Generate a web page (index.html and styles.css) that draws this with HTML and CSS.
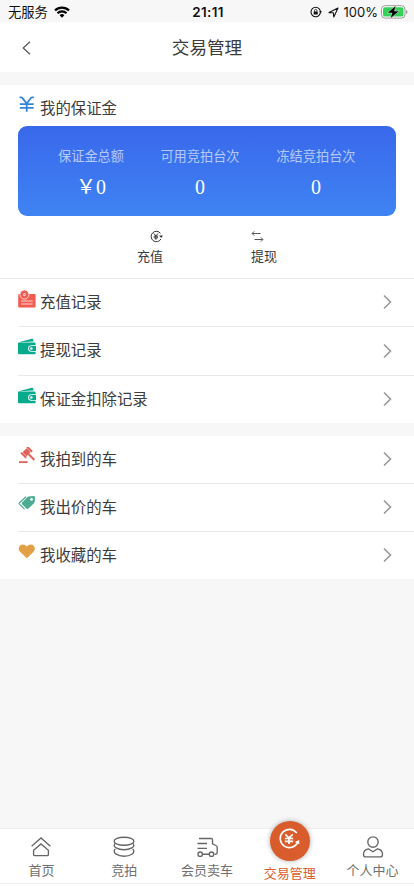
FILE: index.html
```html
<!DOCTYPE html>
<html lang="zh-CN">
<head>
<meta charset="utf-8">
<meta name="viewport" content="width=device-width, initial-scale=1">
<title>交易管理</title>
<link rel="stylesheet" href="styles.css">
</head>
<body>
<svg class="defs" aria-hidden="true">
  <symbol id="wallet" viewBox="0 0 18 18">
    <path fill="#08aa8c" d="M1 4.2 13.8.8q1.2-.3 1.4.8l.4 1.8zM1 4.4H16.6q1 0 1 1V7.2H13.4a3.3 3.3 0 0 0 0 6.6H17.6v1.4q0 1-1 1H1q-1 0-1-1V5.4q0-1 1-1z"/>
    <path fill="#08aa8c" d="M13.4 8.1H18v4.8h-4.6a2.4 2.4 0 0 1 0-4.8z"/><circle cx="13.4" cy="10.5" r="1.2" fill="#fff"/>
  </symbol>
  <symbol id="arrow" viewBox="0 0 9 16"><path d="m1 1.5 6.5 6.5L1 14.5" fill="none" stroke="#999" stroke-width="1.6"/></symbol>
</svg>
<header class="status">
  <div class="carrier"><span>无服务</span>
    <svg width="16" height="12" viewBox="0 0 16 12" fill="none" stroke="#000" stroke-width="2.2"><path d="M1 4.4a10 10 0 0 1 14 0M3.5 7.2a6.3 6.3 0 0 1 9 0"/><path d="M5.6 9.3a3.4 3.4 0 0 1 4.8 0L8 11.8z" fill="#000" stroke="none"/></svg>
  </div>
  <b>21:11</b>
  <div class="device">
    <svg width="12" height="12" viewBox="0 0 12 12"><circle cx="5.7" cy="6" r="4.7" fill="none" stroke="#111" stroke-width="1.1"/><path d="M3.7 5.5h4v3h-4zM9.2 5.2H12l-1.4 2z" fill="#111"/><path d="M4.5 5.8V4.6a1.2 1.2 0 0 1 2.4 0v1.2" fill="none" stroke="#111" stroke-width=".8"/></svg>
    <svg class="locate" width="11" height="11" viewBox="0 0 11 11"><path d="m1 5.6 9-4.6-4.2 9-.5-4.2z" fill="none" stroke="#111" stroke-width="1.1" stroke-linejoin="round"/></svg>
    <span>100%</span>
    <svg class="battery" width="27" height="14" viewBox="0 0 27 14"><rect x=".5" y=".7" width="23.5" height="12.4" rx="3.6" fill="#fff" stroke="#999"/><rect x="2" y="2.2" width="20.5" height="9.4" rx="2.2" fill="#32d158"/><path d="M25 5q1.5.5 1.5 2T25 9z" fill="#999"/><path d="M15 .3 6.2 8h4.7L9.2 13.8 18.4 6h-4.9z" fill="#000" stroke="#f7f7f7" stroke-width=".5"/></svg>
  </div>
</header>
<nav class="header">
  <svg width="9" height="14" viewBox="0 0 9 14"><path d="M8 .7 1.2 7 8 13.3" fill="none" stroke="#555" stroke-width="1.2"/></svg>
  <h1>交易管理</h1>
</nav>
<main>
  <section class="panel">
    <div class="heading">
      <svg width="18" height="18" viewBox="0 0 18 18" fill="none" stroke="#3384d8" stroke-width="1.8"><path d="M1.6 1.4h1.6q.8 0 1.3.7L8.7 7.6 12.9 2q.5-.6 1.3-.6h1.6M1.8 8.1h13.8M1.8 11.9h13.8M8.7 7.4v8.4"/></svg>
      <span>我的保证金</span>
    </div>
    <div class="balance">
      <div class="stat s1"><span>保证金总额</span><strong>￥0</strong></div>
      <div class="stat s2"><span>可用竞拍台次</span><strong>0</strong></div>
      <div class="stat s3"><span>冻结竞拍台次</span><strong>0</strong></div>
    </div>
    <div class="actions">
      <div class="action recharge"><svg width="13" height="13" viewBox="0 0 13 13" fill="none" stroke="#333" stroke-width="1"><path d="M10.5 3.4A5.2 5.2 0 1 0 10.9 9M3.9 3.5l2 2.4 2-2.4M3.7 6.2h4.4M3.7 7.9h4.4M5.9 6v3.8"/><path d="M9.1 5.5h3.9L11.2 8z" fill="#333" stroke="none"/></svg><span>充值</span></div>
      <div class="action withdraw"><svg width="13" height="13" viewBox="0 0 13 13" fill="none" stroke="#555" stroke-width="1"><path d="M9.5 3.5H1.2M3.2 1.4 1.1 3.5l2.1 2.1M3.5 9.5h8.3M9.8 7.4l2.1 2.1-2.1 2.1"/></svg><span>提现</span></div>
    </div>
    <div class="row full"><svg class="icon" viewBox="0 0 18 18"><path d="M1.2 4h15.4q1 0 1 1v11.5q0 1-1 1H1.2q-1 0-1-1V5q0-1 1-1z" fill="#f15b50"/><circle cx="6.4" cy="4.6" r="4.5" fill="#f15b50" stroke="#fff" stroke-width=".7"/><circle cx="6.4" cy="4.6" r="1" fill="#f15b50" stroke="#fff" stroke-width="1"/><path d="M3 11h11.7M3 14h11.7" stroke="#ffd6d2" stroke-width="1"/></svg><span>充值记录</span><svg class="chevron"><use href="#arrow"/></svg></div>
    <div class="row"><svg class="icon"><use href="#wallet"/></svg><span>提现记录</span><svg class="chevron"><use href="#arrow"/></svg></div>
    <div class="row"><svg class="icon"><use href="#wallet"/></svg><span>保证金扣除记录</span><svg class="chevron"><use href="#arrow"/></svg></div>
  </section>
  <section class="panel cars">
    <div class="row full"><svg class="icon" viewBox="0 0 18 18"><g fill="#df6358"><g transform="translate(8.6 5.2) rotate(-45)"><path d="M-2.8-2.8h5.6v5.6h-5.6zM-5.2-3.6h2v7.2h-2zM3.2-3.6h2v7.2h-2zM-1 3H1v8H-1z"/></g><path d="M1 14.2h8.6V16H1z"/></g></svg><span>我拍到的车</span><svg class="chevron"><use href="#arrow"/></svg></div>
    <div class="row"><svg class="icon" viewBox="0 0 18 18"><path d="m10.6 1.5 4.8-.5q1.6-.1 1.6 1.4l-.3 4.4q0 .8-.7 1.4l-5.6 5.3q-1 .9-2 0L4.1 9.3q-.9-.9 0-1.8l5.2-5.3q.5-.6 1.3-.7z" fill="#4cac91"/><circle cx="13.5" cy="4.4" r="1.3" fill="#fff"/><path d="M8 1.8 1.5 7.7q-.8.7 0 1.5l5 5" fill="none" stroke="#4cac91" stroke-width="1.2"/></svg><span>我出价的车</span><svg class="chevron"><use href="#arrow"/></svg></div>
    <div class="row"><svg class="icon" viewBox="0 0 18 18"><path d="M8.8 15.3 2.3 8.9C-.9 5.6 1.4 1.6 4.7 1.6q2.6 0 4.1 2 1.5-2 4.1-2c3.3 0 5.6 4 2.4 7.3z" fill="#e3a047"/></svg><span>我收藏的车</span><svg class="chevron"><use href="#arrow"/></svg></div>
  </section>
</main>
<footer class="tabs">
  <div class="tab"><svg viewBox="0 0 24 24"><path d="M2.6 11.2 12 3l9.4 8.2M4.6 15.2 12 9l7.4 6.2v4.2q0 1.2-1.2 1.2H5.8q-1.2 0-1.2-1.2z"/></svg><span>首页</span></div>
  <div class="tab"><svg viewBox="0 0 24 24"><ellipse cx="12" cy="6.2" rx="9.9" ry="4"/><path d="M3.2 8.4q-2.4 2.7.9 4.5 3.2 1.8 7.9 1.8t7.9-1.8q3.3-1.8.9-4.5M3.2 13.9q-2.4 3.3.9 5.3 3.2 2 7.9 2t7.9-2q3.3-2 .9-5.3"/></svg><span>竞拍</span></div>
  <div class="tab"><svg viewBox="0 0 24 24"><path d="M4 3.5h12.2q1.3 0 1.3 1.3v4l3.4 1.7q1.3.6 1.3 2v4.9q0 1.8-1.8 1.8h-.8M2.5 8.5H12M2.5 13.3H12M7.5 19.2h6.7"/><circle cx="5.2" cy="19.2" r="2.2"/><circle cx="16.5" cy="19.2" r="2.2"/></svg><span>会员卖车</span></div>
  <div class="tab active"><div class="disc"><svg viewBox="0 0 24 24"><path d="M20.5 5.5A10 10 0 1 0 21.6 15.5M8 7l4 4 4-4M7.5 11.5h9M7.5 14.6h9M12 11v6.5"/><path d="m18.5 15.2 4.6-2.2.2 4.6z" fill="#fff" stroke="none"/></svg></div><span>交易管理</span></div>
  <div class="tab"><svg viewBox="0 0 24 24"><circle cx="12" cy="7" r="5.2"/><path d="m7.3 13.8 4.7 2.9 4.7-2.9q4.8 1 4.8 5.6 0 2.4-2 2.4h-15q-2 0-2-2.4 0-4.6 4.8-5.6z"/></svg><span>个人中心</span></div>
</footer>
</body>
</html>
```
FILE: styles.css
```css
* { box-sizing: border-box; }
body {
  margin: 0;
  height: 896px;
  display: flex;
  flex-direction: column;
  overflow: hidden;
  background: #fff;
  color: #3c3c3c;
  font-family: "Liberation Sans", "Noto Sans CJK SC", sans-serif;
}
svg { display: block; flex: none; }
.defs { width: 0; height: 0; position: absolute; }
.status {
  height: 22px;
  flex: none;
  display: grid;
  grid-template-columns: 1fr auto 1fr;
  align-items: center;
  padding: 2px 6px 0 8px;
  background: #f7f7f7;
  color: #111;
  font: 13px/20px Inter, "Noto Sans CJK SC", sans-serif;
}
.status b { font-size: 13.5px; font-weight: 600; letter-spacing: .3px; }
.carrier, .device { display: flex; align-items: center; }
.carrier { gap: 6px; font-size: 13.3px; line-height: 18px; }
.device { justify-content: flex-end; }
.locate { margin: 0 5px 0 6px; }
.battery { margin-left: 3px; }
.header {
  height: 50px;
  flex: none;
  display: grid;
  grid-template-columns: 36px 1fr 36px;
  align-items: center;
}
.header svg { margin: 2px 0 0 22px; }
.header h1 { margin: 2px 0 0; text-align: center; font-size: 17.6px; font-weight: 400; line-height: 26px; }
main { flex: 1; background: #f7f7f7; padding-top: 13px; }
.panel { background: #fff; }
.heading { height: 41px; display: flex; align-items: flex-start; gap: 4px; padding: 11px 18px 0; font-size: 15.4px; line-height: 25px; }
.balance {
  height: 90px;
  margin: 0 18px;
  padding: 21px 28px 0;
  display: grid;
  grid-template-columns: 90px 128px 104px;
  border-radius: 9px;
  background: linear-gradient(#3968eb, #3f83f3);
}
.stat { display: flex; flex-direction: column; align-items: center; color: #fff; }
.stat span { font-size: 13.2px; line-height: 20px; opacity: .62; white-space: nowrap; }
.stat strong { margin-top: 8px; font: 20px/25px "Liberation Serif", "Noto Sans CJK SC", serif; }
.actions { height: 61.5px; display: flex; padding: 14px 0 0 137px; gap: 88px; font-size: 13px; line-height: 20px; }
.action { width: 26px; display: flex; flex-direction: column; gap: 4px; white-space: nowrap; }
.recharge svg { align-self: flex-end; }
.row {
  height: 48.5px;
  margin-left: 18px;
  padding: 1px 22px 0 0;
  display: flex;
  align-items: center;
  border-top: 1.5px solid #e9e9e9;
  font-size: 15.4px;
  line-height: 24px;
}
.row.full { margin-left: 0; padding-left: 18px; }
.icon { width: 18px; height: 18px; margin: 0 4px 8px 0; }
.chevron { width: 9px; height: 16px; margin: 0 0 1px auto; }
.cars { margin-top: 12.6px; }
.cars .row { height: 48.2px; }
.cars .full { height: 47px; border-top: 0; }
.tabs {
  height: 56px;
  flex: none;
  margin-bottom: 12px;
  display: grid;
  grid-template-columns: repeat(5, 1fr);
  border: solid #eee;
  border-width: 1px 0;
  background: #fff;
}
.tab { display: flex; flex-direction: column; align-items: center; padding-top: 6px; color: #707070; font-size: 13px; line-height: 20px; }
.tab svg { width: 24px; height: 24px; fill: none; stroke: #666; stroke-width: 1.35; }
.tab span { margin-top: 2px; white-space: nowrap; }
.tab.active { color: #dc5d2b; padding: 0; }
.active .disc {
  width: 40px;
  height: 40px;
  margin: -8px 0 0 1px;
  display: grid;
  place-items: center;
  border-radius: 50%;
  background: #d95d2c;
  box-shadow: 0 0 5px #aaa;
}
.active .disc svg { stroke: #fff; stroke-width: 1.8; width: 22px; height: 22px; margin: -4px 3px 0 0; }
.active span { margin-top: 3px; }
```
